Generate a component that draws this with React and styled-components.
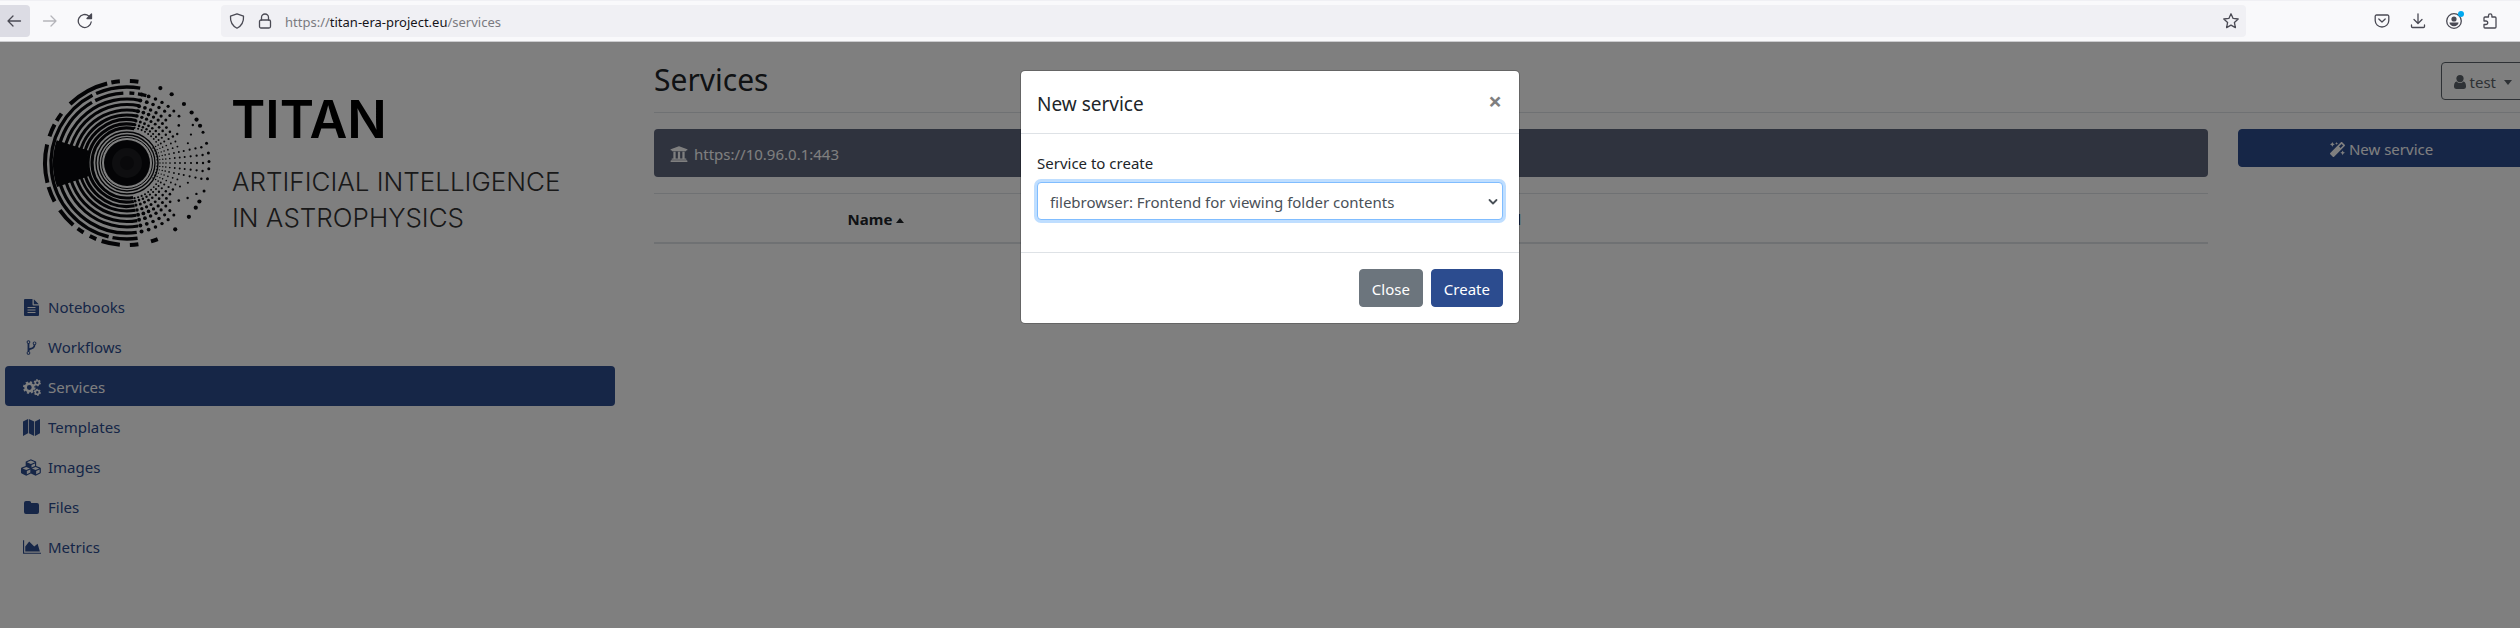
import React from "react";
import styled, { createGlobalStyle, css } from "styled-components";
import { FaMagic, FaUniversity } from "react-icons/fa";

const GlobalStyle = createGlobalStyle`
  *, *::before, *::after { box-sizing: border-box; }
  html, body { margin: 0; }
  body {
    font-family: "Noto Sans", "Open Sans", sans-serif;
    font-size: 15px;
    line-height: 24px;
    color: #212529;
    overflow: hidden;
  }
  button, select, input { font: inherit; }
`;

const Window = styled.div`
  display: flex;
  flex-direction: column;
  min-height: 100vh;
  overflow: hidden;
`;

/* ---------- browser toolbar ---------- */

const Toolbar = styled.header`
  display: flex;
  align-items: center;
  height: 42px;
  padding-right: 15px;
  background: #f9f9fb;
  border-top: 1px solid #f0f0f4;
  border-bottom: 1px solid #cccccf;
`;

const NavButtons = styled.div`
  display: flex;
  gap: 5px;
  width: 221px;
`;

const ToolButton = styled.button`
  display: flex;
  align-items: center;
  justify-content: center;
  width: 30px;
  height: 32px;
  padding: 0;
  border: 0;
  border-radius: 4px;
  background: transparent;
  color: ${(p) => (p.$dim ? "#b5b5ba" : "#4a4a54")};
  ${(p) => p.$edge && css`
    padding-right: 2px;
    border-radius: 0 4px 4px 0;
    background: #dcdce4;
  `}
`;

const AddressBar = styled.div`
  flex: 1;
  display: flex;
  align-items: center;
  gap: 12px;
  height: 32px;
  padding: 0 7px 0 8px;
  border-radius: 4px;
  background: #f0f0f4;
  color: #4a4a54;
`;

const Address = styled.div`
  flex: 1;
  padding-top: 2px;
  font-size: 13px;
  line-height: 20px;
  color: #7a7a80;
  b { font-weight: 400; color: #15141a; }
`;

const ToolIcons = styled.div`
  display: flex;
  gap: 6px;
  margin-left: 121px;
`;

const Line = styled.svg`
  display: block;
  flex: none;
  fill: none;
  stroke: currentColor;
  stroke-width: 1.3;
  stroke-linecap: round;
  stroke-linejoin: round;
`;

/* ---------- page ---------- */

const Viewport = styled.div`
  position: relative;
  flex: 1;
  display: flex;
  align-items: flex-start;
  margin-right: -20px;
  background: #fff;
`;

const Sidebar = styled.aside`
  flex: 0 0 25%;
  padding: 20px 20px 0 5px;
`;

const Logo = styled.svg`
  display: block;
  width: 570px;
  height: 200px;
  margin-bottom: 24px;
`;

const NavList = styled.nav`
  display: flex;
  flex-direction: column;
`;

const NavLink = styled.a`
  display: flex;
  align-items: center;
  gap: 6px;
  padding: 9px 16px 7px;
  border-radius: 4px;
  color: #2c4c8f;
  text-decoration: none;
  ${(p) => p.$active && css`
    background: #2c4c8f;
    color: #fff;
  `}
`;

const NavIcon = styled.span`
  display: flex;
  justify-content: center;
  width: 21px;
`;

const Glyph = styled.svg`
  display: block;
  flex: none;
  fill: currentColor;
`;

const Main = styled.main`
  flex: 1;
  min-width: 0;
  padding: 20px 0 0 4px;
`;

const TitleBar = styled.div`
  display: flex;
  justify-content: space-between;
  align-items: flex-start;
  margin: 0 0 16px 15px;
  padding: 0 15px 12px 0;
  border-bottom: 1px solid #dee2e6;
`;

const PageTitle = styled.h1`
  margin: 0;
  font-size: 30px;
  line-height: 36px;
  font-weight: 400;
`;

const Row = styled.div`
  display: flex;
`;

const Column = styled.div`
  width: ${(p) => (p.$span / 12) * 100}%;
  padding: 0 15px;
`;

const Button = styled.button`
  display: ${(p) => (p.$block ? "flex" : "inline-flex")};
  align-items: center;
  justify-content: center;
  gap: 4px;
  width: ${(p) => (p.$block ? "100%" : "auto")};
  height: 38px;
  padding: 2px 12px 0;
  border: 1px solid ${(p) => p.$border || p.$fill};
  border-radius: 4px;
  background: ${(p) => p.$fill};
  color: ${(p) => p.$ink || "#fff"};
`;

const Caret = styled.span`
  display: inline-block;
  margin-left: 4px;
  border: 4px solid transparent;
  ${(p) => (p.$up
    ? css`border-top: 0; border-bottom: 5px solid; vertical-align: 2px;`
    : css`border-bottom: 0; border-top: 5px solid;`)}
`;

const Endpoint = styled.div`
  display: flex;
  align-items: center;
  gap: 6px;
  height: 48px;
  margin-bottom: 16px;
  padding: 2px 16px 0;
  border-radius: 4px;
  background: #5e667c;
  color: #fff;
`;

const Table = styled.table`
  width: 100%;
  border-collapse: collapse;
  table-layout: fixed;
`;

const HeadCell = styled.th`
  width: ${(p) => p.$width};
  padding: 13px 12px 11px;
  border-top: 1px solid #dee2e6;
  border-bottom: 2px solid #dee2e6;
  text-align: center;
  font-weight: 700;
`;

/* ---------- dialog ---------- */

const Backdrop = styled.div`
  position: absolute;
  inset: 0;
  display: flex;
  align-items: flex-start;
  justify-content: center;
  padding-top: 28px;
  background: rgba(0, 0, 0, 0.5);
`;

const Dialog = styled.form`
  width: 500px;
  border: 1px solid rgba(0, 0, 0, 0.2);
  border-radius: 5px;
  background: #fff;
  background-clip: padding-box;
`;

const DialogHeader = styled.div`
  display: flex;
  justify-content: space-between;
  align-items: flex-start;
  padding: 16px 16px 12px;
  border-bottom: 1px solid #dee2e6;
`;

const DialogTitle = styled.h2`
  margin: 0;
  font-size: 19px;
  line-height: 34px;
  font-weight: 400;
`;

const CloseButton = styled.button`
  padding: 0 1px;
  border: 0;
  background: none;
  color: #7f7f7f;
  font-size: 24px;
  line-height: 28px;
  font-weight: 700;
`;

const DialogBody = styled.div`
  padding: 17px 16px 32px;
`;

const Label = styled.label`
  display: block;
  margin-bottom: 7px;
`;

const SelectBox = styled.div`
  position: relative;
  svg {
    position: absolute;
    right: 5px;
    top: 15px;
    color: #495057;
    pointer-events: none;
  }
`;

const Select = styled.select`
  display: block;
  width: 100%;
  height: 38px;
  padding: 2px 28px 0 12px;
  appearance: none;
  border: 1px solid #80bdff;
  border-radius: 4px;
  outline: 0;
  background: #fff;
  color: #495057;
  box-shadow: 0 0 0 3px #bfdeff;
`;

const DialogFooter = styled.div`
  display: flex;
  justify-content: flex-end;
  gap: 8px;
  padding: 16px;
  border-top: 1px solid #dee2e6;
`;

/* ---------- logo ---------- */

const INK = "#08090c";

const polar = (r, deg) => {
  const a = (deg * Math.PI) / 180;
  return [r * Math.cos(a), r * Math.sin(a)];
};

const arc = (r, from, to) => {
  const [x1, y1] = polar(r, from);
  const [x2, y2] = polar(r, to);
  return `M${x1.toFixed(2)} ${y1.toFixed(2)}A${r} ${r} 0 ${to - from > 180 ? 1 : 0} 1 ${x2.toFixed(2)} ${y2.toFixed(2)}`;
};

// Dashes of the outermost ring: [start, end] in degrees, clockwise from east.
const OUTER = [
  [68, 73], [82, 88], [95, 108], [112, 117], [122, 127], [131, 145], [152, 163],
  [166, 193], [199, 208], [211, 217], [226, 256], [259, 265], [272, 278],
];

// Dots thin out towards the outside; the radii are shared by all the rays.
const RADII = [30, 33, 36, 39, 43, 48, 53, 58, 64, 70, 76];
const DOTS = [];
for (let ray = 0; ray < 27; ray++) {
  const angle = -78 + ray * 6;
  const steep = Math.abs(angle) / 78;
  RADII.forEach((r, ring) => {
    if (steep > 0.4 && ring < 2) return;
    if (steep > 0.2 && steep < 0.55 && ring > 6 && (ray + ring) % 3) return;
    if (steep > 0.5 && ring > 9) return;
    const size = steep < 0.35 ? 0.6 + ring * 0.06 : 0.7 + Math.min(1, ring / 6) * steep * 1.3;
    const [x, y] = polar(r, angle);
    DOTS.push([x, y, size]);
  });
}
const RIM = [-66, -57, -46, -38, -32, -27, -22, -14, -7, -1, 4, 11, 20, 28, 33, 41, 54].map((a) => [
  ...polar(82, a), Math.abs(a) < 24 ? 1.5 : 2.1,
]);

function TitanLogo() {
  return (
    <Logo viewBox="5 62 570 200" role="img" aria-label="TITAN Artificial Intelligence in Astrophysics">
      <g transform="translate(127 163)" fill="none" stroke={INK}>
        {OUTER.map(([a, b]) => <path key={a} d={arc(82, a, b)} strokeWidth="4" />)}
        <path d={arc(76, 82, 101)} strokeWidth="3.4" />
        <path d={arc(76, 104, 243)} strokeWidth="3.4" />
        <path d={arc(76, 246, 280)} strokeWidth="3.4" />
        <path d={arc(70, 82, 240)} strokeWidth="3.4" />
        <path d={arc(70, 243, 267)} strokeWidth="3.4" />
        <path d={arc(70, 272, 276)} strokeWidth="3.4" />
        <path d={arc(70, 279, 286)} strokeWidth="3.4" />
        {[64, 58.5, 53, 48, 43.5, 39, 35].map((r) => (
          <path key={r} d={arc(r, 80, 282)} strokeWidth="3.1" />
        ))}
        <path d={arc(57, 161, 198)} strokeWidth="34" />
        <circle r="31" strokeWidth="1.4" />
        <circle r="28" strokeWidth="1.3" />
        <circle r="25.5" strokeWidth="1" />
        <circle r="23" fill={INK} stroke="none" />
        <circle r="15" fill="#1c1d20" stroke="none" />
        <circle r="7" fill="#121316" stroke="none" />
      </g>
      <g transform="translate(127 163)" fill={INK}>
        {[...DOTS, ...RIM].map(([x, y, r], i) => (
          <circle key={i} cx={x.toFixed(2)} cy={y.toFixed(2)} r={r.toFixed(2)} />
        ))}
      </g>
      <text x="231" y="138" fontFamily="Inter, sans-serif" fontSize="52" fontWeight="600" fill="#000">TITAN</text>
      <text x="232" y="191" fontFamily="Inter, sans-serif" fontSize="26" fontWeight="300" fill="#333">ARTIFICIAL INTELLIGENCE</text>
      <text x="232" y="227" fontFamily="Inter, sans-serif" fontSize="26" fontWeight="300" fill="#333">IN ASTROPHYSICS</text>
    </Logo>
  );
}

/* ---------- toolbar icons ---------- */

const BackIcon = () => <Line width="16" height="16" viewBox="0 0 16 16"><path d="M14.500 8H2M7 3L2 8l5 5" /></Line>;
const ForwardIcon = () => <Line width="16" height="16" viewBox="0 0 16 16"><path d="M1.500 8H14M9 3l5 5-5 5" /></Line>;
const ReloadIcon = () => (
  <Line width="16" height="16" viewBox="0 0 16 16">
    <path d="M14.200 9A6.500 6.500 0 1 1 11.800 2.900L14 5" />
    <path d="M14.500 1v4.500H10z" fill="currentColor" />
  </Line>
);
const ShieldIcon = () => <Line width="16" height="16" viewBox="0 0 16 16"><path d="M8 .8L1.500 3.200c-.4 5.300 1.500 9.300 6.500 12 5-2.700 6.900-6.700 6.500-12z" /></Line>;
const LockIcon = () => (
  <Line width="16" height="16" viewBox="0 0 16 16">
    <rect x="2.500" y="7" width="11" height="8" rx="1.500" />
    <path d="M4.500 7V4.500a3.500 3.500 0 0 1 7 0V7" />
  </Line>
);
const StarIcon = () => <Line width="16" height="16" viewBox="0 0 16 16"><path d="M8 .8l2.100 4.600 5.100.6-3.800 3.500 1 5.100L8 12.100l-4.400 2.500 1-5.100L.8 6l5.100-.6z" /></Line>;
const PocketIcon = () => (
  <Line width="16" height="16" viewBox="0 0 16 16">
    <path d="M2.500 2h11a1.300 1.300 0 0 1 1.300 1.300V7.500a6.800 6.500 0 0 1-13.600 0V3.300A1.300 1.300 0 0 1 2.500 2z" />
    <path d="M4.800 6L8 9l3.200-3" />
  </Line>
);
const DownloadIcon = () => <Line width="16" height="16" viewBox="0 0 16 16"><path d="M8 .8V10M4 6.500L8 10.500l4-4M1.500 12v1.500a1 1 0 0 0 1 1h11a1 1 0 0 0 1-1V12" /></Line>;
const AccountIcon = () => (
  <Line width="20" height="20" viewBox="0 0 20 20">
    <circle cx="10" cy="10" r="7.300" />
    <circle cx="10" cy="8" r="2.600" fill="currentColor" stroke="none" />
    <path d="M5.500 11.500h9c0 2-1.800 3.700-4.500 3.700s-4.500-1.700-4.500-3.700z" fill="currentColor" stroke="none" />
    <circle cx="17" cy="3" r="3" fill="#00a8f0" stroke="none" />
  </Line>
);
const PuzzleIcon = () => (
  <Line width="16" height="16" viewBox="0 0 16 16">
    <path d="M2 8V5a1 1 0 0 1 1-1h3.500V2.500a1.700 1.700 0 0 1 3.400 0V4H13a1 1 0 0 1 1 1v9a1 1 0 0 1-1 1H3a1 1 0 0 1-1-1v-2.500h2a1.700 1.700 0 0 0 0-3.500z" />
  </Line>
);

/* ---------- page icons ---------- */

const FileIcon = () => (
  <Glyph width="15" height="17" viewBox="0 0 15 17">
    <path fillRule="evenodd" d="M1 0h7.500v5.500a1 1 0 0 0 1 1H15V16a1 1 0 0 1-1 1H1a1 1 0 0 1-1-1V1a1 1 0 0 1 1-1zM3.500 8v1h8V8zM3.500 10.500v1h8v-1zM3.500 13v1h8v-1zM9.800 0.200L14.800 5.300H9.800z" />
  </Glyph>
);
const ForkIcon = () => (
  <Glyph width="17" height="17" viewBox="0 0 1792 1792">
    <path d="M672 1472q0-40-28-68t-68-28-68 28-28 68 28 68 68 28 68-28 28-68zm0-1152q0-40-28-68t-68-28-68 28-28 68 28 68 68 28 68-28 28-68zm640 128q0-40-28-68t-68-28-68 28-28 68 28 68 68 28 68-28 28-68zm96 0q0 52-26 96.500t-70 69.500q-2 287-226 414-67 38-203 81-128 40-169.500 71t-41.500 100v26q44 25 70 69.500t26 96.500q0 80-56 136t-136 56-136-56-56-136q0-52 26-96.500t70-69.500v-820q-44-25-70-69.500t-26-96.500q0-80 56-136t136-56 136 56 56 136q0 52-26 96.500t-70 69.500v497q54-26 154-57 55-17 87.500-29.500t70.500-31 59-39.500 40.500-51 28-69.500 8.500-91.500q-44-25-70-69.500t-26-96.500q0-80 56-136t136-56 136 56 56 136z" />
  </Glyph>
);
const CogsIcon = () => (
  <Glyph width="18" height="17" viewBox="0 0 18 17">
    <g fill="none" stroke="currentColor">
      <circle cx="6.300" cy="8.500" r="3.700" strokeWidth="2.600" />
      <circle cx="6.300" cy="8.500" r="5.400" strokeWidth="1.800" strokeDasharray="2.200 2.040" />
      <circle cx="14.300" cy="3.700" r="2" strokeWidth="1.600" />
      <circle cx="14.300" cy="3.700" r="3" strokeWidth="1.200" strokeDasharray="1.600 1.540" />
      <circle cx="14.300" cy="13.300" r="2" strokeWidth="1.600" />
      <circle cx="14.300" cy="13.300" r="3" strokeWidth="1.200" strokeDasharray="1.600 1.540" />
    </g>
  </Glyph>
);
const MapIcon = () => (
  <Glyph width="17" height="17" viewBox="0 0 17 17">
    <path d="M0 2.500L5 0v14.300L0 17zM5.800 0l5.400 2.500V17l-5.400-2.700zM12 2.500L17 0v14.300L12 17z" />
  </Glyph>
);
const CubesIcon = () => (
  <Glyph width="21" height="17" viewBox="0 0 2304 1792">
    <path d="M640 1632l384-192v-314l-384 164v342zm-64-454l404-173-404-173-404 173zm1088 454l384-192v-314l-384 164v342zm-64-454l404-173-404-173-404 173zm-448-293l384-165v-266l-384 164v267zm-64-379l441-189-441-189-441 189zm1088 518v416q0 36-19 67t-52 47l-448 224q-25 14-57 14t-57-14l-448-224q-4-2-7-4-2 2-7 4l-448 224q-25 14-57 14t-57-14l-448-224q-33-16-52-47t-19-67v-416q0-38 21.500-70t56.500-48l434-186v-400q0-38 21.500-70t56.500-48l448-192q23-10 50-10t50 10l448 192q35 16 56.500 48t21.500 70v400l434 186q36 16 57 48t21 70z" />
  </Glyph>
);
const FolderIcon = () => (
  <Glyph width="15" height="13" viewBox="0 0 15 13">
    <path d="M2 0h3.200a2 2 0 0 1 2 2H13a2 2 0 0 1 2 2v7a2 2 0 0 1-2 2H2a2 2 0 0 1-2-2V2a2 2 0 0 1 2-2z" />
  </Glyph>
);
const ChartIcon = () => (
  <Glyph width="18" height="16" viewBox="0 0 2048 1792">
    <path d="M2048 1536v128h-2048v-1536h128v1408h1920zm-384-1024l256 896h-1664v-576l448-576 576 576z" />
  </Glyph>
);
const UserIcon = () => (
  <Glyph width="12" height="14" viewBox="0 0 12 14">
    <circle cx="6" cy="3.600" r="3.600" />
    <path d="M2.600 6.500a4.600 4.600 0 0 0 6.800 0C11.400 6.900 12 9 12 11.300A2.500 2.500 0 0 1 9.600 14H2.400A2.500 2.500 0 0 1 0 11.300C0 9 .6 6.900 2.600 6.500z" />
  </Glyph>
);

const NAV = [
  ["Notebooks", FileIcon],
  ["Workflows", ForkIcon],
  ["Services", CogsIcon],
  ["Templates", MapIcon],
  ["Images", CubesIcon],
  ["Files", FolderIcon],
  ["Metrics", ChartIcon],
];

export default function App() {
  return (
    <Window>
      <GlobalStyle />
      <Toolbar>
        <NavButtons>
          <ToolButton $edge aria-label="Back"><BackIcon /></ToolButton>
          <ToolButton $dim aria-label="Forward"><ForwardIcon /></ToolButton>
          <ToolButton aria-label="Reload"><ReloadIcon /></ToolButton>
        </NavButtons>
        <AddressBar>
          <ShieldIcon />
          <LockIcon />
          <Address>https://<b>titan-era-project.eu</b>/services</Address>
          <StarIcon />
        </AddressBar>
        <ToolIcons>
          <ToolButton aria-label="Pocket"><PocketIcon /></ToolButton>
          <ToolButton aria-label="Downloads"><DownloadIcon /></ToolButton>
          <ToolButton aria-label="Account"><AccountIcon /></ToolButton>
          <ToolButton aria-label="Extensions"><PuzzleIcon /></ToolButton>
        </ToolIcons>
      </Toolbar>

      <Viewport>
        <Sidebar>
          <TitanLogo />
          <NavList>
            {NAV.map(([label, Icon]) => (
              <NavLink key={label} href="#" $active={label === "Services"}>
                <NavIcon><Icon /></NavIcon>
                {label}
              </NavLink>
            ))}
          </NavList>
        </Sidebar>

        <Main>
          <TitleBar>
            <PageTitle>Services</PageTitle>
            <Button $fill="transparent" $border="#5c636a" $ink="#5c636a">
              <UserIcon />
              test
              <Caret />
            </Button>
          </TitleBar>
          <Row>
            <Column $span={10}>
              <Endpoint><FaUniversity size={18} />https://10.96.0.1:443</Endpoint>
              <Table>
                <thead>
                  <tr>
                    <HeadCell $width="444px">Name<Caret $up /></HeadCell>
                    <HeadCell>Created</HeadCell>
                    <HeadCell $width="323px" aria-label="Actions" />
                  </tr>
                </thead>
              </Table>
            </Column>
            <Column $span={2}>
              <Button $block $fill="#2c4c8f"><FaMagic size={15} />New service</Button>
            </Column>
          </Row>
        </Main>

        <Backdrop>
          <Dialog role="dialog" aria-labelledby="dialog-title" onSubmit={(e) => e.preventDefault()}>
            <DialogHeader>
              <DialogTitle id="dialog-title">New service</DialogTitle>
              <CloseButton type="button" aria-label="Close dialog">×</CloseButton>
            </DialogHeader>
            <DialogBody>
              <Label htmlFor="service">Service to create</Label>
              <SelectBox>
                <Select id="service" defaultValue="filebrowser">
                  <option value="filebrowser">filebrowser: Frontend for viewing folder contents</option>
                </Select>
                <Line width="10" height="10" viewBox="0 0 10 10"><path d="M1.500 3L5 6.500 8.500 3" strokeWidth="1.800" /></Line>
              </SelectBox>
            </DialogBody>
            <DialogFooter>
              <Button type="button" $fill="#6c757d">Close</Button>
              <Button type="submit" $fill="#2c4c8f">Create</Button>
            </DialogFooter>
          </Dialog>
        </Backdrop>
      </Viewport>
    </Window>
  );
}
